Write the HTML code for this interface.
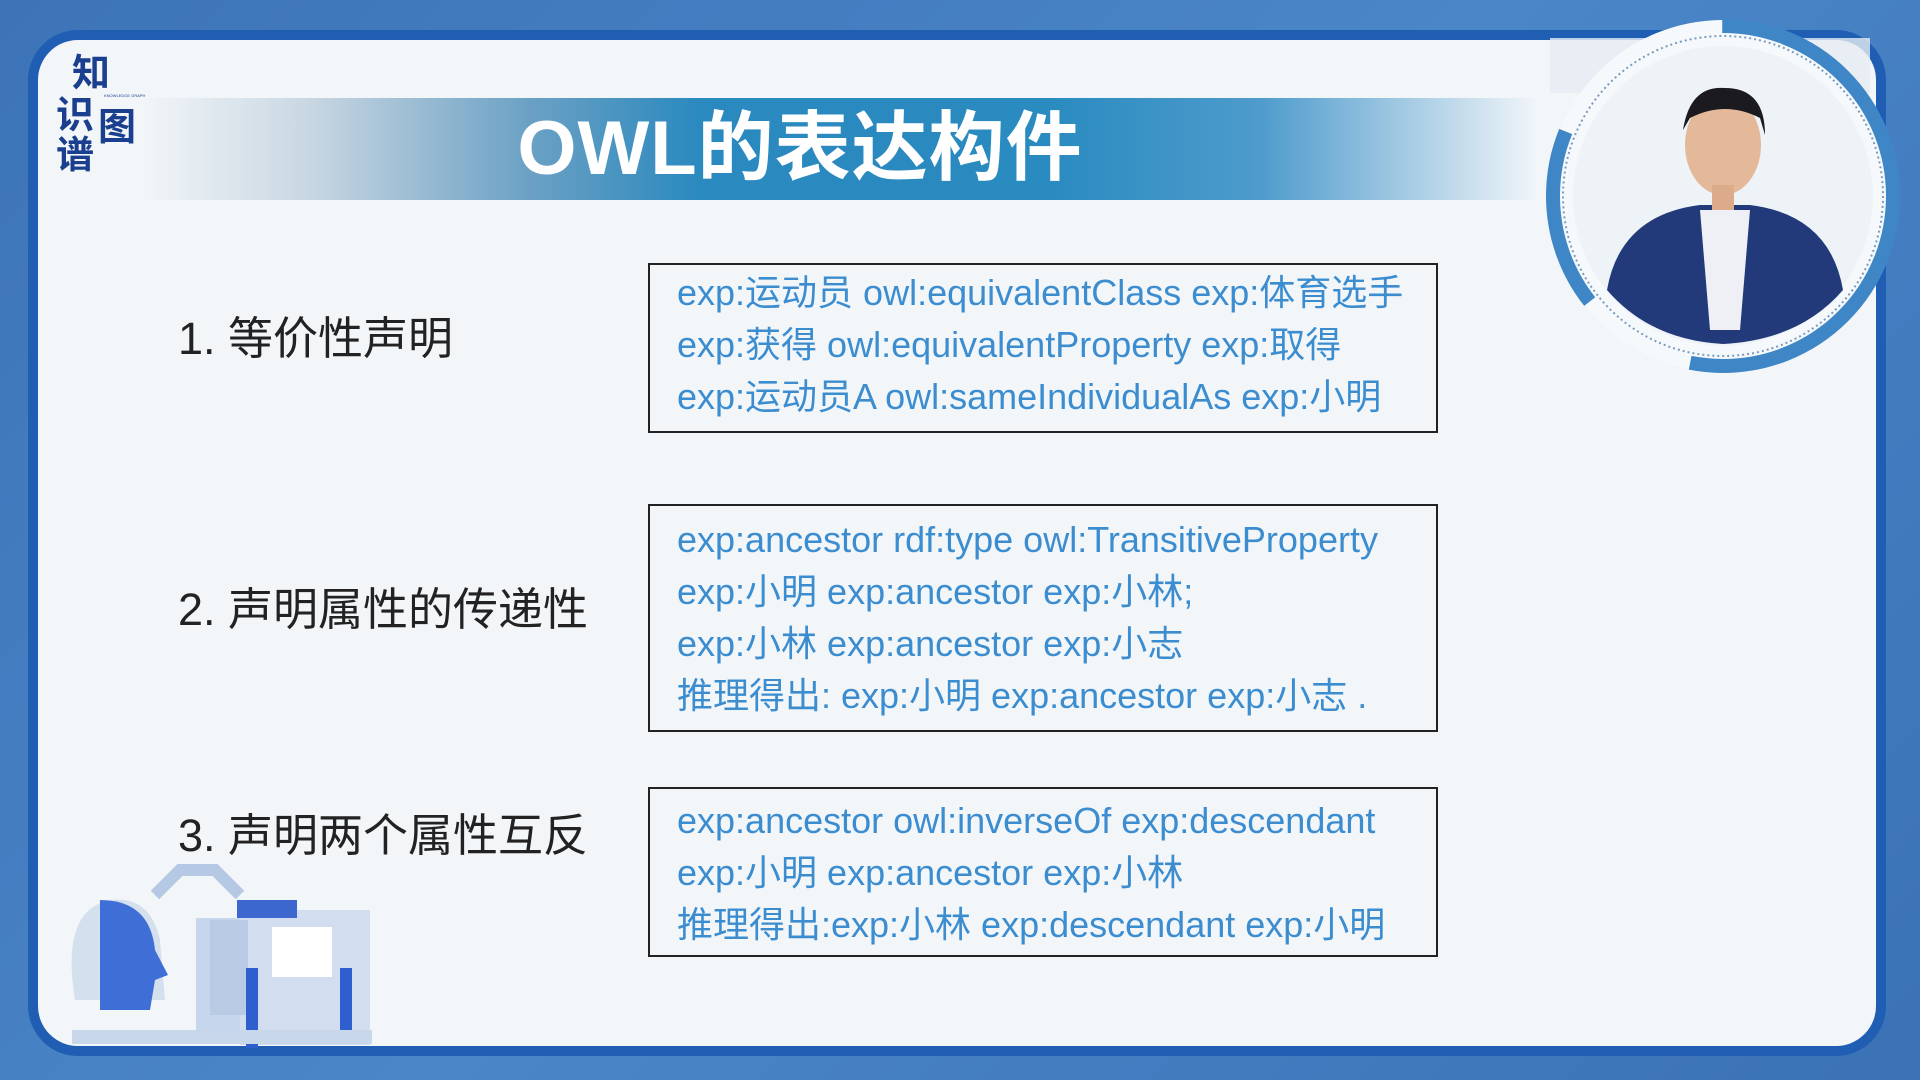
<!DOCTYPE html>
<html><head><meta charset="utf-8"><style>
*{margin:0;padding:0;box-sizing:border-box}
body{width:1920px;height:1080px;overflow:hidden;background:linear-gradient(135deg,#3d74b8,#4a86c8 50%,#3b72b6);position:relative;font-family:"Liberation Sans","Noto Sans CJK SC",sans-serif}
.panel{position:absolute;left:28px;top:30px;width:1858px;height:1026px;border:10px solid #1f5eb3;border-radius:50px;background:#f3f6f9;overflow:hidden}
.banner{position:absolute;left:140px;top:98px;width:1400px;height:102px;background:linear-gradient(90deg,rgba(243,246,249,0) 0%,#c9d7e2 12%,#6aa0c4 28%,#2a89bf 40%,#2a8bc0 65%,#4e9bcc 80%,rgba(243,246,249,0) 100%)}
.title{position:absolute;left:440px;top:104px;width:720px;text-align:center;color:#fff;font-size:76px;line-height:90px;white-space:nowrap;font-family:"Liberation Sans","Noto Sans CJK SC",sans-serif;font-weight:bold;letter-spacing:1px}
.logo{position:absolute;color:#1b3f8f;font-weight:bold;font-family:"Noto Sans CJK SC",sans-serif;font-size:38px;line-height:40px}
.lbl{position:absolute;left:178px;font-size:45px;color:#222;font-family:"Liberation Sans","Noto Sans CJK SC",sans-serif;white-space:nowrap}
.box{position:absolute;left:648px;width:790px;border:2px solid #222;padding:0 0 0 27px;color:#3b8dd0;font-size:36px;line-height:52px;font-family:"Liberation Sans","Noto Sans CJK SC",sans-serif;white-space:nowrap}
</style></head><body>
<div class="panel"></div>
<div class="banner"></div>
<div class="title">OWL的表达构件</div>
<div class="logo" style="left:72px;top:50px">知</div>
<div class="logo" style="left:56px;top:92px">识</div>
<div class="logo" style="left:98px;top:104px">图</div>
<div class="logo" style="left:56px;top:132px">谱</div>
<div style="position:absolute;left:104px;top:93px;font-size:4px;color:#1b3f8f">KNOWLEDGE GRAPH</div>

<div class="lbl" style="top:302px">1. 等价性声明</div>
<div class="lbl" style="top:573px">2. 声明属性的传递性</div>
<div class="lbl" style="top:799px">3. 声明两个属性互反</div>

<div class="box" style="top:263px;height:170px;padding-top:2px">exp:运动员 owl:equivalentClass exp:体育选手<br>exp:获得 owl:equivalentProperty exp:取得<br>exp:运动员A owl:sameIndividualAs exp:小明</div>
<div class="box" style="top:504px;height:228px;padding-top:8px">exp:ancestor rdf:type owl:TransitiveProperty<br>exp:小明 exp:ancestor exp:小林;<br>exp:小林 exp:ancestor exp:小志<br>推理得出: exp:小明 exp:ancestor exp:小志 .</div>
<div class="box" style="top:787px;height:170px;padding-top:6px">exp:ancestor owl:inverseOf exp:descendant<br>exp:小明 exp:ancestor exp:小林<br>推理得出:exp:小林 exp:descendant exp:小明</div>

<svg style="position:absolute;left:0;top:0" width="1920" height="1080">
 <rect x="1550" y="38" width="320" height="55" fill="#e6ecf3" opacity="0.8"/>
 <circle cx="1723" cy="196" r="176" fill="#f6f9fc"/>
 <circle cx="1723" cy="196" r="170" fill="none" stroke="#3f86c6" stroke-width="14" stroke-dasharray="300 120 180 200" />
 <circle cx="1723" cy="196" r="160" fill="none" stroke="#7a9bbd" stroke-width="2" stroke-dasharray="2 3"/>
 <circle cx="1723" cy="196" r="150" fill="#eef3f8"/>
 <path d="M1607 290 Q1620 215 1700 205 L1750 205 Q1830 215 1843 290 Q1800 340 1723 344 Q1650 340 1607 290Z" fill="#22397a"/>
 <path d="M1700 210 L1750 210 L1740 330 L1710 330Z" fill="#eef0f6"/>
 <ellipse cx="1723" cy="145" rx="38" ry="50" fill="#e4b99a"/>
 <path d="M1683 130 Q1690 85 1725 88 Q1765 88 1765 135 L1760 118 Q1725 100 1690 118Z" fill="#1b1b1f"/>
 <rect x="1712" y="185" width="22" height="25" fill="#dcab8c"/>
 <path d="M75 1000 Q60 910 110 900 Q150 895 160 940 L165 1000Z" fill="#d5e0ee"/>
 <path d="M100 900 Q150 900 155 950 L168 975 L155 980 L150 1010 L100 1010Z" fill="#3f6fd6"/>
 <rect x="196" y="918" width="60" height="125" fill="#c6d6ec"/>
 <rect x="240" y="910" width="130" height="135" fill="#d2def0"/>
 <rect x="210" y="920" width="38" height="95" fill="#b9cbe4"/>
 <rect x="272" y="927" width="60" height="50" fill="#fff"/>
 <rect x="237" y="900" width="60" height="18" fill="#3b67cf"/>
 <path d="M155 895 L180 870 L215 870 L240 895" stroke="#b5c8e4" stroke-width="12" fill="none"/>
 <rect x="246" y="968" width="12" height="80" fill="#2f5fce"/>
 <rect x="340" y="968" width="12" height="75" fill="#2f5fce"/>
 <rect x="72" y="1030" width="300" height="14" fill="#c9d7ea"/>
</svg>
</body></html>
